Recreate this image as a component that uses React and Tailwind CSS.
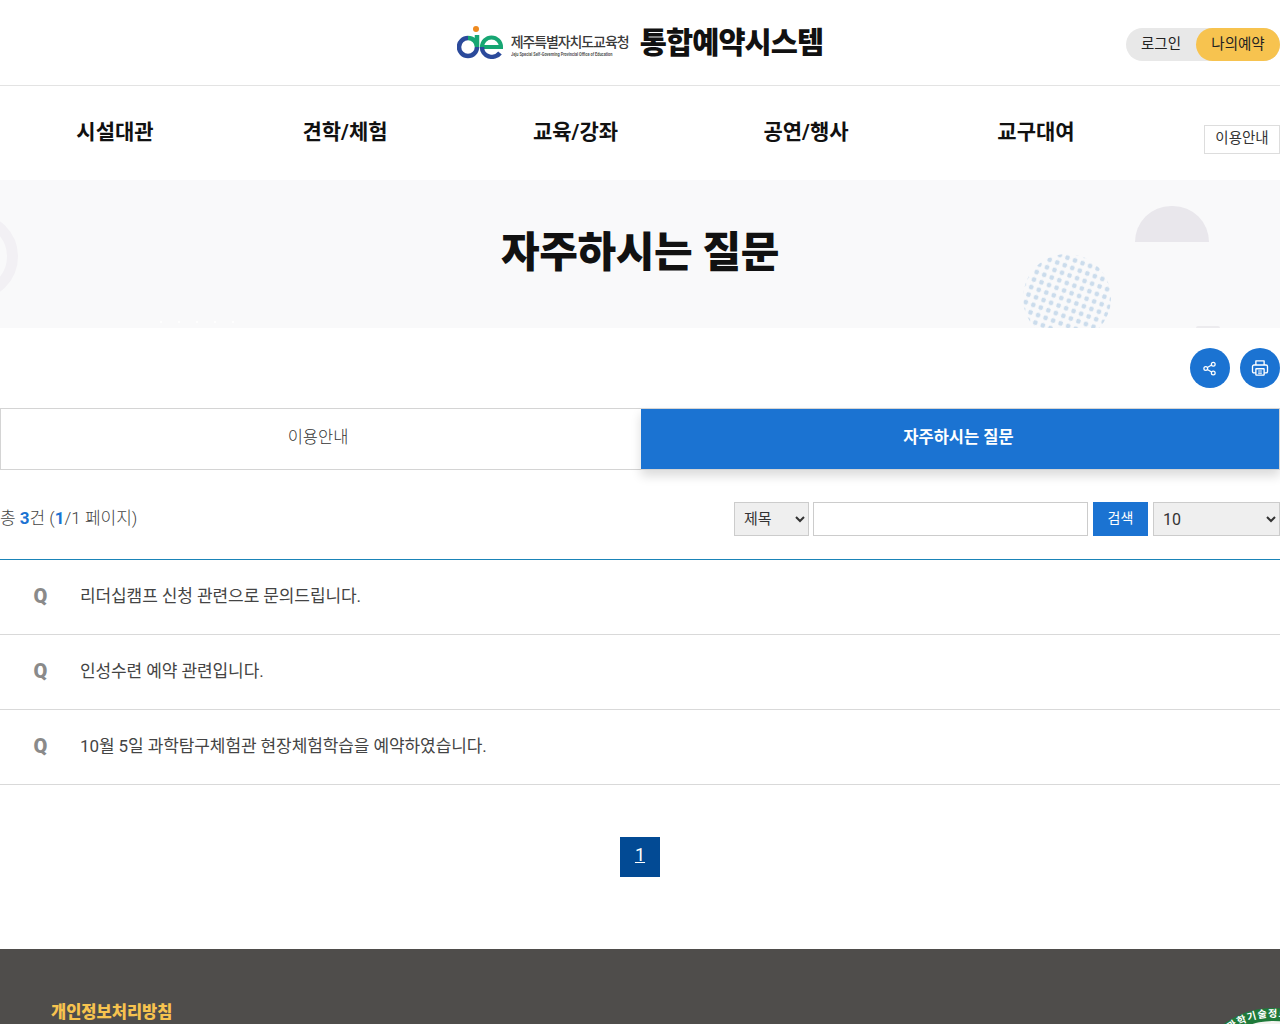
import { Share2 } from 'lucide-react'

const font = { fontFamily: 'Roboto, "Noto Sans CJK KR", sans-serif' }

const menus = [
  { label: '시설대관', w: 'w-[230px]' },
  { label: '견학/체험', w: 'w-[230px]' },
  { label: '교육/강좌', w: 'w-[231px]' },
  { label: '공연/행사', w: 'w-[230px]' },
  { label: '교구대여', w: 'w-[230px]' },
]

const questions = [
  '리더십캠프 신청 관련으로 문의드립니다.',
  '인성수련 예약 관련입니다.',
  '10월 5일 과학탐구체험관 현장체험학습을 예약하였습니다.',
]

// 로고 그림 (d + e 모양)
function Logo() {
  return (
    <svg width="46" height="33" viewBox="0 0 46 33" fill="none">
      <circle cx="19" cy="3" r="3" fill="#ef8a1f" />
      <path d="M11 12 A9 9 0 1 0 20 21" stroke="#2b4a9b" strokeWidth="4.5" />
      <path d="M20 9 V21 A9 9 0 0 0 11 12" stroke="#17a673" strokeWidth="4.5" />
      <path d="M25 21 H44 A9.5 9.5 0 0 0 25 21" stroke="#17a673" strokeWidth="4" />
      <path d="M25 21 A10 9.5 0 0 0 43 27" stroke="#2b4a9b" strokeWidth="4.5" />
    </svg>
  )
}

function PrintIcon() {
  return (
    <svg width="18" height="18" viewBox="0 0 24 24" fill="none" stroke="currentColor" strokeWidth="1.8" strokeLinejoin="round">
      <path d="M6.5 8 V2.5 H17.5 V8" />
      <rect x="2" y="8" width="20" height="10.5" rx="2" />
      <rect x="6.5" y="13" width="11" height="8.5" rx="0.5" fill="#1b73d2" />
      <path d="M9.5 16 H14.5 M9.5 18.8 H14.5" strokeWidth="1.4" />
    </svg>
  )
}

function DotCircle() {
  return (
    <svg width="90" height="74" viewBox="0 0 90 74" className="absolute left-[1022px] top-[74px]">
      <defs>
        <pattern id="dots" width="8" height="8" patternUnits="userSpaceOnUse" patternTransform="rotate(20)">
          <circle cx="4" cy="4" r="2.4" fill="#cbdcec" />
        </pattern>
      </defs>
      <circle cx="45" cy="44" r="44" fill="url(#dots)" />
    </svg>
  )
}

function Seal() {
  return (
    <svg width="64" height="17" viewBox="0 0 64 17" className="absolute right-0 top-[58px]">
      <defs>
        <path id="sealArc" d="M14 23.6 A75 75 0 0 1 82 14.3" />
      </defs>
      <circle cx="57" cy="85" r="84" fill="#1f7a3a" />
      <circle cx="57" cy="85" r="71" fill="#f3f3ef" />
      <text fontSize="10" fontWeight="700" fill="#fff" letterSpacing="1" style={font}>
        <textPath href="#sealArc">과학기술정보</textPath>
      </text>
    </svg>
  )
}

export default function App() {
  return (
    <div className="h-[1024px] overflow-hidden bg-white" style={font}>
      <header className="relative flex h-[86px] items-center justify-center border-b border-[#e3e3e3]">
        <div className="flex items-center">
          <Logo />
          <div className="mt-[5px] ml-[8px] flex w-[118px] flex-col">
            <span className="text-[14px] leading-[17px] font-medium tracking-[-1.1px] whitespace-nowrap text-[#3a3a3a]">제주특별자치도교육청</span>
            <span className="origin-left scale-x-[0.78] text-[5px] leading-[6px] font-bold whitespace-nowrap text-[#555]">Jeju Special Self-Governing Provincial Office of Education</span>
          </div>
          <span className="ml-[11px] text-[29.5px] leading-[34px] font-black tracking-[-0.9px] text-[#111]">통합예약시스템</span>
        </div>
        <div className="absolute top-[28px] right-0 flex h-[33px] w-[154px] items-center rounded-full bg-[#e8e8e8] text-[14.5px] text-[#222]">
          <span className="w-[70px] text-center">로그인</span>
          <span className="flex h-[33px] w-[84px] items-center justify-center rounded-full bg-[#f7c34f]">나의예약</span>
        </div>
      </header>

      <nav className="relative flex h-[94px] items-center">
        {menus.map((m) => (
          <a key={m.label} className={`${m.w} text-center text-[21px] font-bold text-[#111]`}>{m.label}</a>
        ))}
        <a className="absolute top-[39px] right-0 flex h-[29px] w-[76px] items-center justify-center border border-[#ddd] pb-[2px] text-[14.5px] text-[#333]">이용안내</a>
      </nav>

      <section className="relative flex h-[148px] items-center justify-center overflow-hidden bg-[#f9f9fa] pb-[4px]">
        <h1 className="text-[42px] font-black tracking-[-0.35px] text-[#111]">자주하시는 질문</h1>
        <div className="absolute top-[33px] -left-[69px] h-[87px] w-[87px] rounded-full border-[11px] border-[#f2f0f4]" />
        <div className="absolute top-[26px] left-[1135px] h-[36px] w-[74px] rounded-t-full bg-[#e9e7ec]" />
        <div className="absolute top-[146px] left-[1196px] h-[2px] w-[24px] rounded-t-full bg-[#ecebee]" />
        <div className="absolute top-[141px] left-[160px] flex gap-[16px]">
          <span className="h-[2px] w-[2px] rounded-full bg-white" />
          <span className="h-[2px] w-[2px] rounded-full bg-white" />
          <span className="h-[2px] w-[2px] rounded-full bg-white" />
          <span className="h-[2px] w-[2px] rounded-full bg-white" />
          <span className="h-[2px] w-[2px] rounded-full bg-white" />
        </div>
        <DotCircle />
      </section>

      <div className="flex h-[80px] items-start justify-end gap-[10px] pt-[20px]">
        <button className="flex h-[40px] w-[40px] items-center justify-center rounded-full bg-[#1b73d2] pr-[1px] text-white">
          <Share2 size={15} />
        </button>
        <button className="flex h-[40px] w-[40px] items-center justify-center rounded-full bg-[#1b73d2] text-white">
          <PrintIcon />
        </button>
      </div>

      <div className="flex h-[62px]">
        <a className="flex w-[641px] items-center justify-center border border-r-0 border-[#d4d4d4] pr-[6px] pb-[2px] text-[16.5px] font-light text-[#333]">이용안내</a>
        <a className="flex w-[639px] items-center justify-center border border-l-0 border-[#d4d4d4] bg-[#1b73d2] bg-clip-padding pr-[3px] pb-[2px] text-[16.5px] font-bold text-white shadow-[0_6px_10px_rgba(0,0,0,0.14)]">자주하시는 질문</a>
      </div>

      <div className="flex h-[89px] items-start justify-between pt-[32px]">
        <p className="text-[17px] leading-[32px] font-light text-[#444]">
          총 <b className="font-bold text-[#1b73d2]">3</b>건 (<b className="font-bold text-[#1b73d2]">1</b>/1 페이지)
        </p>
        <div className="flex items-start">
          <select className="h-[34px] w-[75px] border border-[#ccc] bg-[#efefef] pl-[5px] text-[15px] text-[#333]">
            <option>제목</option>
          </select>
          <input className="ml-[4px] h-[34px] w-[275px] border border-[#ccc] bg-white" />
          <button className="ml-[5px] h-[34px] w-[55px] bg-[#1b73d2] pb-[1px] text-[14px] text-white">검색</button>
          <select className="ml-[5px] h-[34px] w-[127px] border border-[#ccc] bg-[#efefef] pl-[5px] text-[16px] text-[#333]">
            <option>10</option>
          </select>
        </div>
      </div>

      <div className="h-px bg-[#1a84b8]" />
      <ul>
        {questions.map((q) => (
          <li key={q} className="flex h-[75px] items-center border-b border-[#d9d9d9]">
            <span className="w-[80px] pb-[3px] pl-[1px] text-center text-[20px] font-black text-[#8a8a8a]">Q</span>
            <span className="text-[17px] tracking-[-0.1px] text-[#444]">{q}</span>
          </li>
        ))}
      </ul>

      <div className="flex h-[164px] justify-center pt-[52px]">
        <a className="flex h-[40px] w-[40px] items-center justify-center bg-[#024a94] pb-[6px] text-[18px] text-white underline">1</a>
      </div>

      <footer className="relative h-[200px] bg-[#4f4d4b] pt-[52px] pl-[51px]">
        <a className="text-[16.5px] leading-[24px] font-black text-[#f7c34f]">개인정보처리방침</a>
        <Seal />
      </footer>
    </div>
  )
}
